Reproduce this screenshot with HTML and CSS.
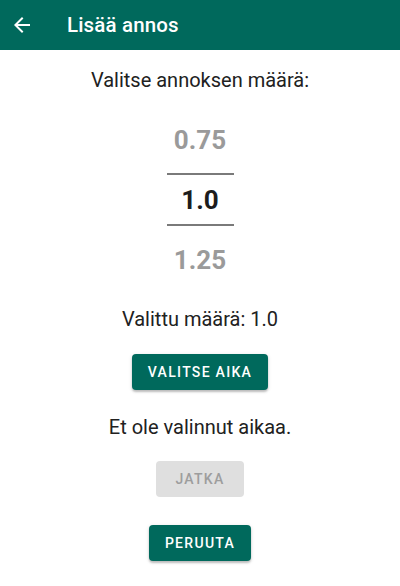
FILE: index.html
```html
<!DOCTYPE html>
<html lang="fi">
<head>
<meta charset="utf-8">
<link rel="stylesheet" href="styles.css">
</head>
<body>
<header class="appbar">
  <svg class="back" width="24" height="24" viewBox="0 0 24 24"><path d="M20 11H7.83l5.59-5.59L12 4l-8 8 8 8 1.41-1.41L7.83 13H20v-2z" fill="#fff"/></svg>
  <h1 class="title">Lisää annos</h1>
</header>
<main class="content">
  <p class="label first">Valitse annoksen määrä:</p>
  <div class="picker">
    <div class="num dim">0.75</div>
    <div class="rule top"></div>
    <div class="num sel">1.0</div>
    <div class="rule"></div>
    <div class="num dim low">1.25</div>
  </div>
  <p class="label chosen">Valittu määrä: 1.0</p>
  <button class="btn primary pick">VALITSE AIKA</button>
  <p class="label notime">Et ole valinnut aikaa.</p>
  <button class="btn disabled">JATKA</button>
  <button class="btn primary cancel">PERUUTA</button>
</main>
</body>
</html>
```
FILE: styles.css
```css
* { box-sizing: border-box; }
html, body { margin: 0; padding: 0; background: #fff; }
body { font-family: Roboto, "Noto Sans", sans-serif; color: #212121; width: 400px; height: 586px; overflow: hidden; }
.appbar { height: 50px; background: #00695c; display: flex; align-items: center; padding-left: 10px; }
.back { display: block; }
.title { margin: 0 0 0 33px; font-size: 20.5px; font-weight: 500; color: #fff; letter-spacing: 0.15px; }
.content { display: flex; flex-direction: column; align-items: center; }
.label { margin: 0; font-size: 20px; line-height: 24px; color: #212121; }
.first { margin-top: 18px; }
.picker { display: flex; flex-direction: column; align-items: center; margin-top: 24px; }
.num { height: 48px; display: flex; align-items: center; justify-content: center; font-size: 26px; font-weight: 700; }
.dim { color: #9a9a9a; }
.sel { color: #1c1c1c; height: 49px; }
.rule { width: 67px; height: 2px; background: #7a7a7a; }
.rule.top { margin-top: 9px; }
.low { margin-top: 10px; }
.chosen { margin-top: 23px; }
.btn { border: none; border-radius: 4px; height: 36px; min-width: 88px; font-family: Roboto, sans-serif; font-size: 14px; font-weight: 500; letter-spacing: 1.3px; padding: 0 16px; }
.primary { background: #00695c; color: #fff; box-shadow: 0 2px 2px rgba(0,0,0,0.2), 0 1px 4px rgba(0,0,0,0.12); }
.pick { margin-top: 23px; }
.notime { margin-top: 25px; }
.disabled { background: #dfdfdf; color: #9d9d9d; margin-top: 22px; }
.cancel { margin-top: 28px; }
```
